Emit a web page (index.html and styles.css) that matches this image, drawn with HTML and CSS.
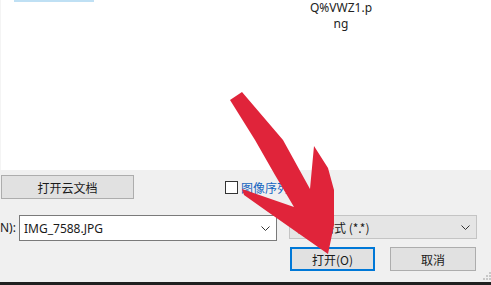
FILE: index.html
```html
<!DOCTYPE html>
<html lang="zh">
<head>
<meta charset="utf-8">
<link rel="stylesheet" href="styles.css">
</head>
<body>
<div class="window">
  <div class="files">
    <div class="sel-edge"></div>
    <div class="file-item">Q%VWZ1.p<br>ng</div>
  </div>
  <div class="panel">
    <div class="row row-top">
      <button class="btn btn-cloud">打开云文档</button>
      <label class="check"><span class="box"></span><span class="check-label">图像序列</span></label>
    </div>
    <div class="row row-name">
      <span class="name-label">N):</span>
      <div class="input">
        <span class="input-text">IMG_7588.JPG</span>
        <svg class="chev" width="9" height="5" viewBox="0 0 9 5"><path d="M0.5 0.5 L4.5 4.5 L8.5 0.5" fill="none" stroke="#333" stroke-width="1"/></svg>
      </div>
      <div class="select">
        <span class="select-text">所有格式 (*.*)</span>
        <svg class="chev" width="9" height="5" viewBox="0 0 9 5"><path d="M0.5 0.5 L4.5 4.5 L8.5 0.5" fill="none" stroke="#333" stroke-width="1"/></svg>
      </div>
    </div>
    <div class="row row-actions">
      <button class="btn btn-open">打开(O)</button>
      <button class="btn btn-cancel">取消</button>
      <svg class="grip" width="9" height="9" viewBox="0 0 9 9">
        <rect x="7" y="1" width="2" height="2" fill="#c8c8c8"/>
        <rect x="4" y="4" width="2" height="2" fill="#c8c8c8"/>
        <rect x="7" y="4" width="2" height="2" fill="#c8c8c8"/>
        <rect x="1" y="7" width="2" height="2" fill="#c8c8c8"/>
        <rect x="4" y="7" width="2" height="2" fill="#c8c8c8"/>
        <rect x="7" y="7" width="2" height="2" fill="#c8c8c8"/>
      </svg>
    </div>
  </div>
  <div class="bottom-line"></div>
  <svg class="arrow" width="491" height="285" viewBox="0 0 491 285">
    <polygon fill="#e0243a" points="230,100 242,92 283,140 310,189 314,146 328,168 334,190 334,225 328,254 268,212 244,195 242,189 268,198 294,207 275,175 255,140"/>
  </svg>
</div>
</body>
</html>
```
FILE: styles.css
```css
* { box-sizing: border-box; }
html, body { margin: 0; padding: 0; }
body {
  width: 491px;
  height: 285px;
  overflow: hidden;
  font-family: "Noto Sans", "Noto Sans CJK SC", sans-serif;
  font-size: 12px;
  color: #1a1a1a;
}
.window {
  position: relative;
  width: 491px;
  height: 285px;
  display: flex;
  flex-direction: column;
  background: #f0f0f0;
}
.files {
  height: 170px;
  background: #fff;
  display: flex;
  align-items: flex-start;
  padding-left: 13px;
  border-left: 1px solid #f4f4f4;
}
.sel-edge {
  width: 80px;
  height: 2px;
  background: #bfe0f4;
}
.file-item {
  width: 80px;
  margin-left: 207px;
  text-align: center;
  line-height: 16px;
  color: #222;
}
.panel {
  flex: 1;
  display: flex;
  flex-direction: column;
}
.row { display: flex; align-items: center; }
.row-top {
  margin-top: 5px;
  height: 24px;
  padding-left: 1px;
}
.btn {
  font-family: "Noto Sans CJK SC", "Noto Sans", sans-serif;
  font-size: 12px;
  color: #1a1a1a;
  background: #e1e1e1;
  border: 1px solid #adadad;
  height: 24px;
  padding: 0;
  margin: 0;
}
.btn-cloud { width: 133px; }
.check {
  display: flex;
  align-items: center;
  margin-left: 91px;
}
.box {
  width: 13px;
  height: 13px;
  border: 1px solid #333;
  background: #fff;
}
.check-label {
  margin-left: 3px;
  color: #1565c0;
  font-family: "Noto Sans CJK SC", sans-serif;
}
.row-name {
  margin-top: 16px;
  height: 26px;
  align-items: flex-start;
}
.name-label {
  width: 19px;
  line-height: 26px;
}
.input {
  width: 258px;
  height: 26px;
  background: #fff;
  border: 1px solid #7a7a7a;
  display: flex;
  align-items: center;
  justify-content: space-between;
  padding: 0 6px 0 4px;
}
.select {
  width: 188px;
  height: 24px;
  margin-left: 12px;
  background: #e5e5e5;
  border: 1px solid #c4c4c4;
  display: flex;
  align-items: center;
  justify-content: space-between;
  padding: 0 6px 0 8px;
  font-family: "Noto Sans CJK SC", "Noto Sans", sans-serif;
}
.chev { display: block; }
.row-actions {
  margin-top: 6px;
  height: 35px;
  align-items: flex-start;
  padding-left: 290px;
}
.btn-open {
  width: 85px;
  border: 2px solid #0078d7;
}
.btn-cancel {
  width: 86px;
  margin-left: 15px;
}
.grip {
  margin-left: 6px;
  margin-top: 24px;
}
.bottom-line {
  height: 3px;
  background: #202020;
}
.arrow {
  position: absolute;
  left: 0;
  top: 0;
  pointer-events: none;
}
```
